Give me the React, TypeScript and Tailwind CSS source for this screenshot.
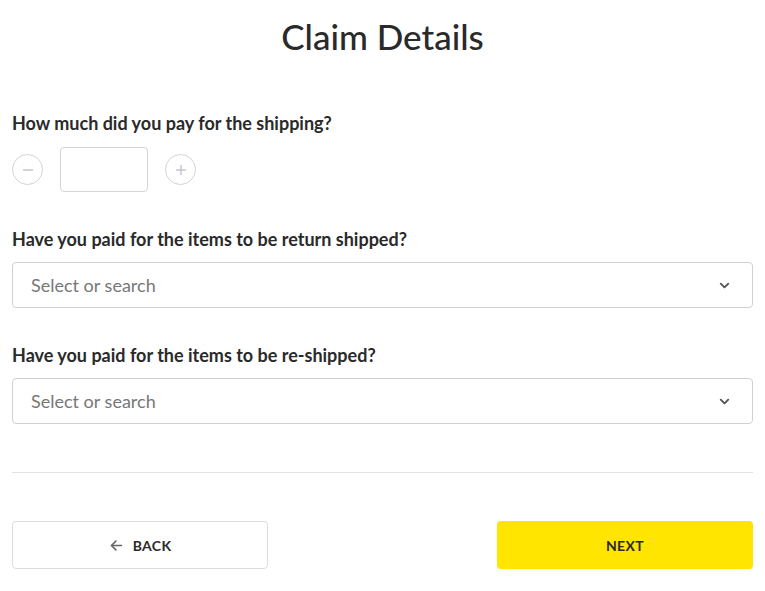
import React, { useState } from 'react';

const fontStack = { fontFamily: 'Lato, "Open Sans", sans-serif' };

const ChevronDown = () => (
  <svg width="15" height="15" viewBox="0 0 24 24" fill="none" stroke="#555" strokeWidth="3" strokeLinecap="round" strokeLinejoin="round">
    <polyline points="6 9 12 15 18 9" />
  </svg>
);

const SelectBox = ({ placeholder }: { placeholder: string }) => (
  <div className="flex h-[46px] items-center justify-between rounded border border-[#cfcfd4] bg-white pl-[18px] pr-[20px]">
    <span className="text-[18px] text-[#777]">{placeholder}</span>
    <ChevronDown />
  </div>
);

const CircleButton = ({ children }: { children: React.ReactNode }) => (
  <button className="flex h-[31px] w-[31px] items-center justify-center rounded-full border border-[#d4d4d8] text-[#c4c4cc]">
    {children}
  </button>
);

export default function App() {
  const [amount, setAmount] = useState('');

  return (
    <div className="min-h-[591px] w-full bg-white px-3 text-[#2a2a2a]" style={fontStack}>
      <h1 className="pt-[14px] text-center text-[35px] font-medium leading-[44px]">Claim Details</h1>

      <div className="mt-[53px]">
        <p className="text-[18px] font-bold leading-[24px]">How much did you pay for the shipping?</p>
        <div className="mt-[12px] flex items-center gap-[17px]">
          <CircleButton>
            <svg width="14" height="14" viewBox="0 0 14 14" stroke="currentColor" strokeWidth="1.5"><line x1="2" y1="7" x2="12" y2="7" /></svg>
          </CircleButton>
          <input
            value={amount}
            onChange={e => setAmount(e.target.value)}
            className="h-[45px] w-[88px] rounded border border-[#d4d4d8] px-2 text-center outline-none"
          />
          <CircleButton>
            <svg width="14" height="14" viewBox="0 0 14 14" stroke="currentColor" strokeWidth="1.5"><line x1="2" y1="7" x2="12" y2="7" /><line x1="7" y1="2" x2="7" y2="12" /></svg>
          </CircleButton>
        </div>
      </div>

      <div className="mt-[35px]">
        <p className="text-[18px] font-bold leading-[24px]">Have you paid for the items to be return shipped?</p>
        <div className="mt-[11px]">
          <SelectBox placeholder="Select or search" />
        </div>
      </div>

      <div className="mt-[35px]">
        <p className="text-[18px] font-bold leading-[24px]">Have you paid for the items to be re-shipped?</p>
        <div className="mt-[11px]">
          <SelectBox placeholder="Select or search" />
        </div>
      </div>

      <div className="mt-[48px] border-t border-[#e2e2e6]" />

      <div className="mt-[48px] flex justify-between">
        <button className="flex h-[48px] w-[256px] items-center justify-center gap-[9px] rounded border border-[#dcdce0] bg-white text-[14px] font-bold tracking-wide">
          <svg width="15" height="15" viewBox="0 0 24 24" fill="none" stroke="#666" strokeWidth="2.5" strokeLinecap="round" strokeLinejoin="round">
            <line x1="20" y1="12" x2="4" y2="12" />
            <polyline points="11 5 4 12 11 19" />
          </svg>
          BACK
        </button>
        <button className="flex h-[48px] w-[256px] items-center justify-center rounded bg-[#ffe500] text-[14px] font-bold tracking-wide">
          NEXT
        </button>
      </div>
    </div>
  );
}
